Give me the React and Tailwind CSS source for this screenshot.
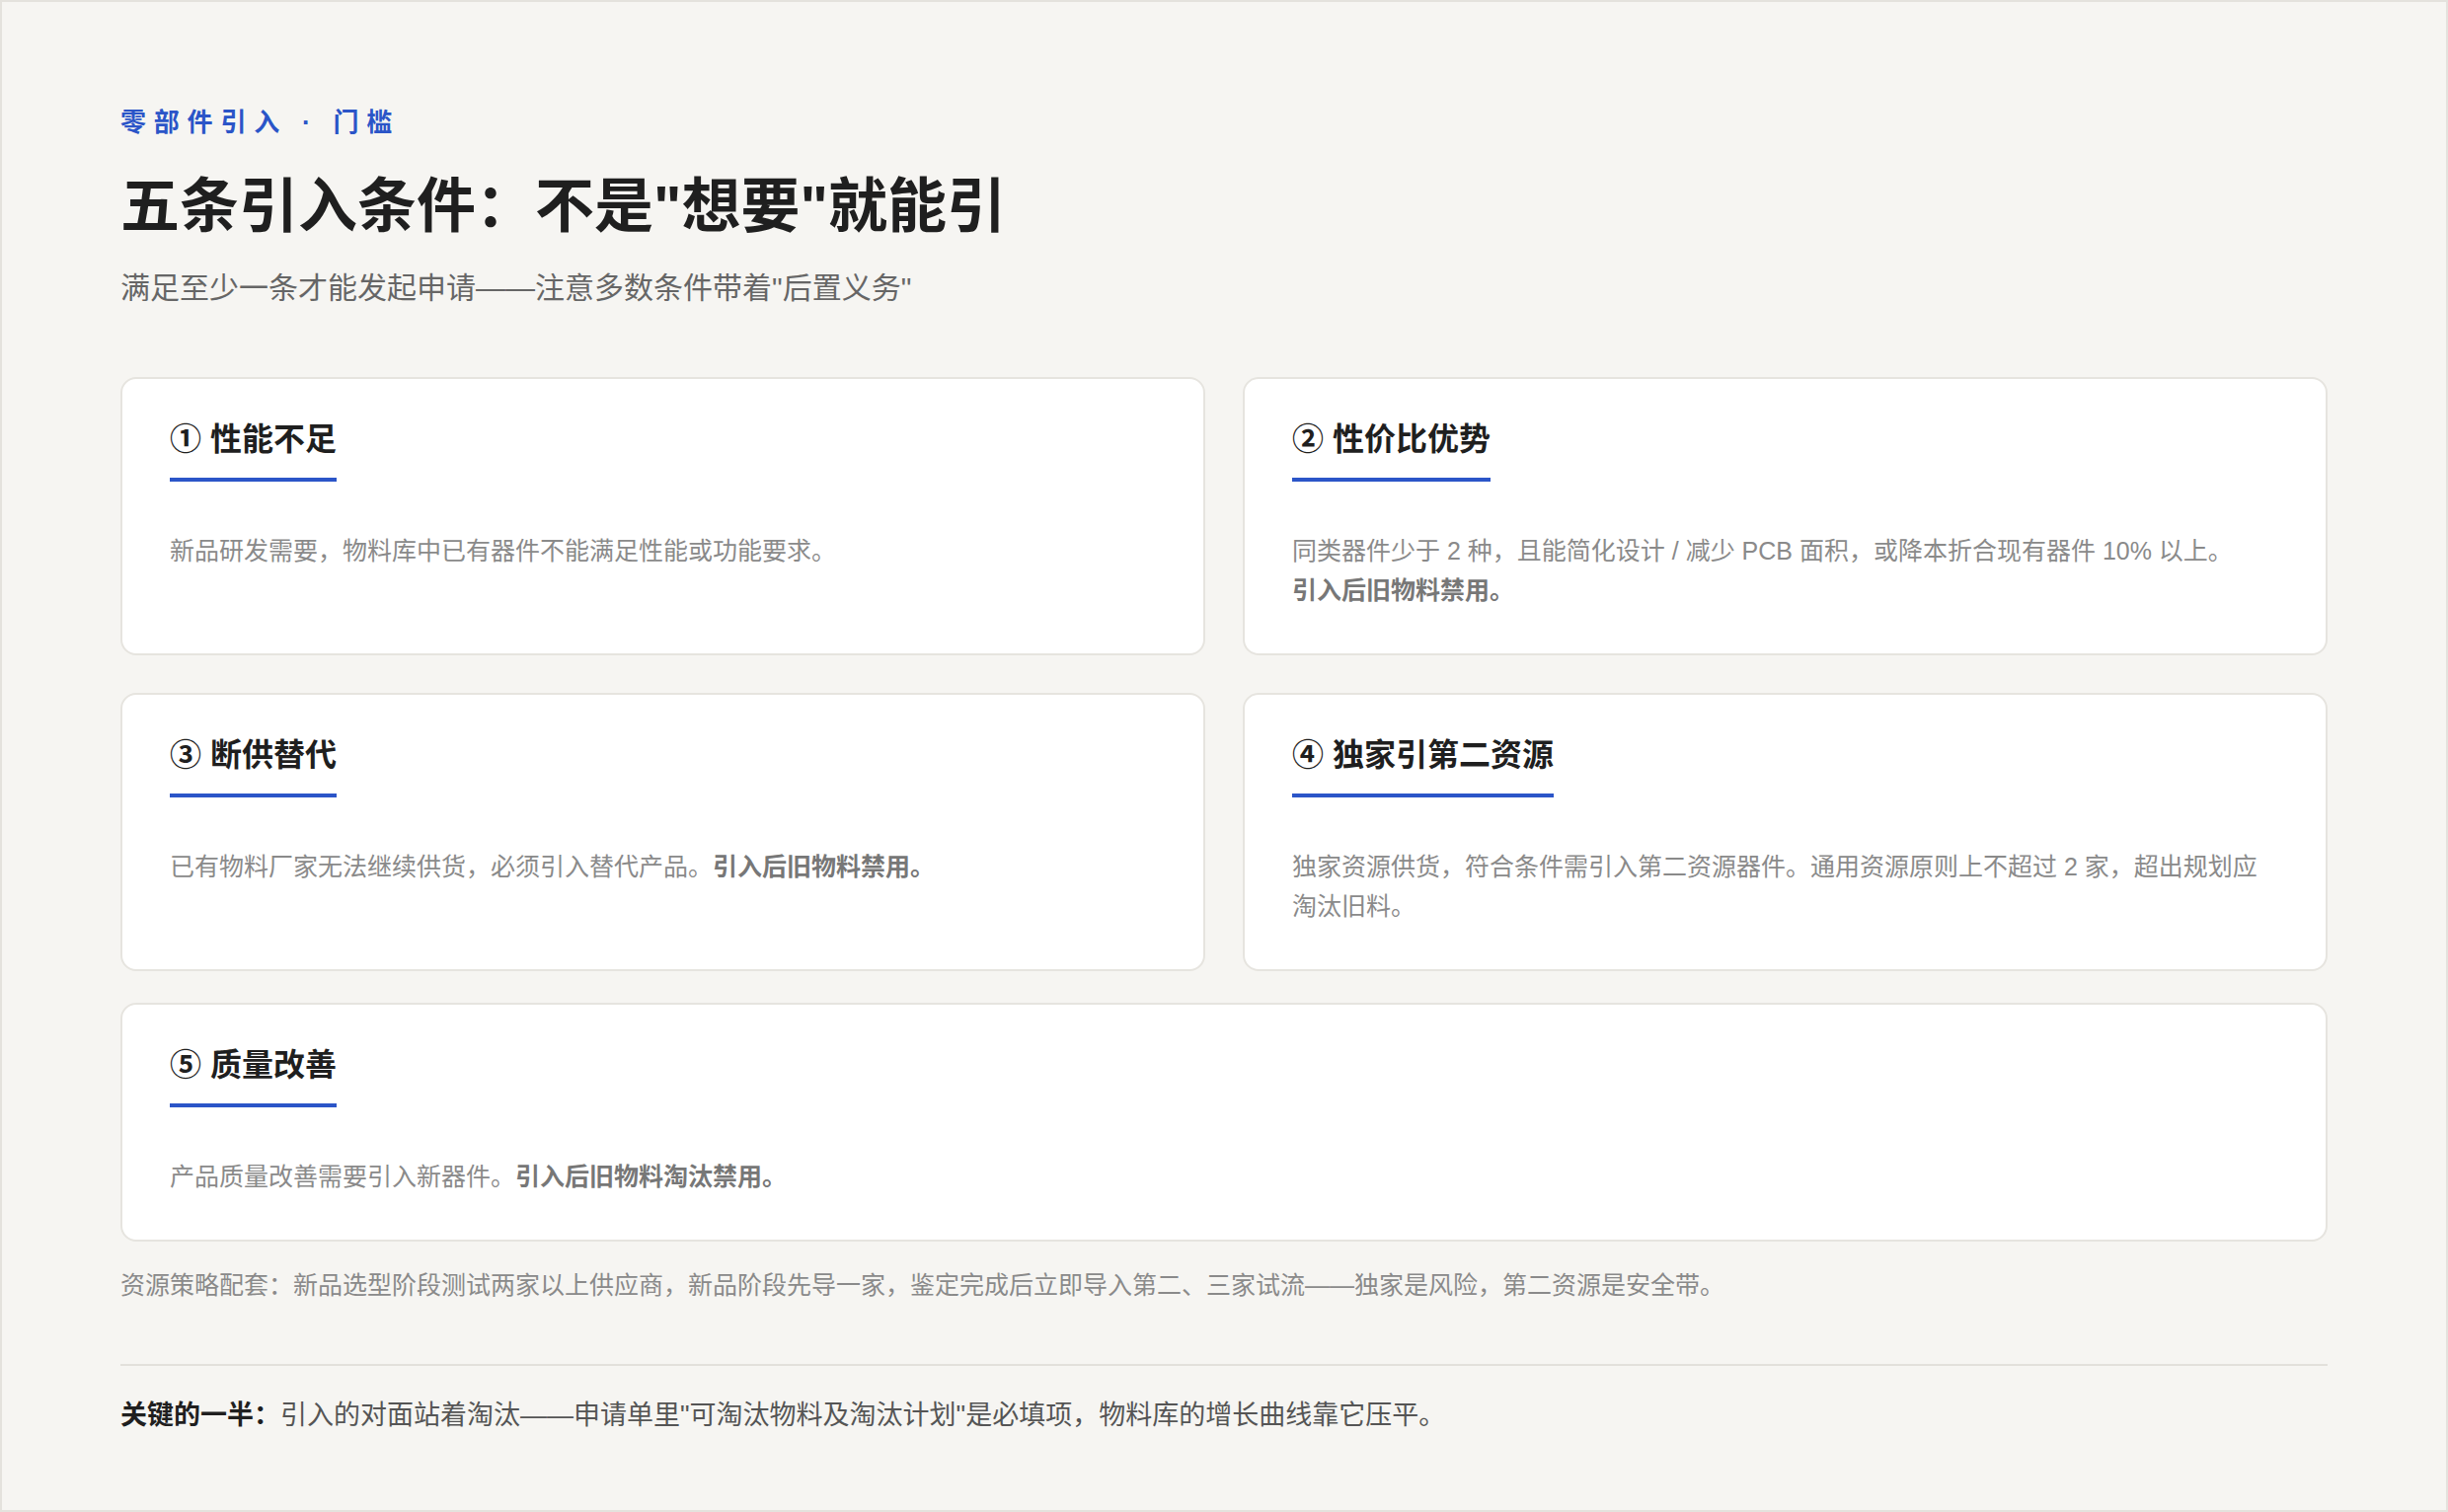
export default function App() {
  const ff = { fontFamily: '"Liberation Sans", "Noto Sans CJK SC", sans-serif' };
  const Card = ({ title, children, className = "" }) => (
    <div className={"bg-white border-2 border-[#e6e4df] rounded-[16px] pt-[42px] pb-[44px] px-[48px] " + className}>
      <div>
        <span className="inline-block text-[32px] leading-[38px] font-bold text-[#1f1f1f] pb-[20px] border-b-[4px] border-[#2b55c8]">{title}</span>
      </div>
      <p className="mt-[50px] text-[25px] leading-[40px] text-[#8a8a8a]">{children}</p>
    </div>
  );
  const B = ({ children }) => <b className="font-bold text-[#777]">{children}</b>;
  return (
    <div style={ff} className="w-[2480px] h-[1532px] bg-[#f6f5f2] border-2 border-[#e4e2dd] px-[120px] pt-[104px]">
      <div className="text-[26px] leading-[36px] font-bold tracking-[0.3em] text-[#2b55c8]">零部件引入 · 门槛</div>
      <h1 className="mt-[28px] text-[60px] leading-[80px] font-bold text-[#1f1f1f]">五条引入条件：不是"想要"就能引</h1>
      <p className="mt-[22px] text-[30px] leading-[40px] text-[#666]">满足至少一条才能发起申请——注意多数条件带着"后置义务"</p>
      <div className="mt-[70px] grid grid-cols-2 gap-x-[38px] gap-y-[38px]">
        <Card title="① 性能不足">新品研发需要，物料库中已有器件不能满足性能或功能要求。</Card>
        <Card title="② 性价比优势">同类器件少于 2 种，且能简化设计 / 减少 PCB 面积，或降本折合现有器件 10% 以上。<br /><B>引入后旧物料禁用。</B></Card>
        <Card title="③ 断供替代">已有物料厂家无法继续供货，必须引入替代产品。<B>引入后旧物料禁用。</B></Card>
        <Card title="④ 独家引第二资源">独家资源供货，符合条件需引入第二资源器件。通用资源原则上不超过 2 家，超出规划应淘汰旧料。</Card>
        <Card title="⑤ 质量改善" className="col-span-2 -mt-[6px]">产品质量改善需要引入新器件。<B>引入后旧物料淘汰禁用。</B></Card>
      </div>
      <p className="mt-[24px] text-[25px] leading-[40px] text-[#8a8a8a]">资源策略配套：新品选型阶段测试两家以上供应商，新品阶段先导一家，鉴定完成后立即导入第二、三家试流——独家是风险，第二资源是安全带。</p>
      <div className="mt-[60px] border-t-2 border-[#e2e0db]" />
      <p className="mt-[30px] text-[27px] leading-[40px] text-[#555]"><b className="font-bold text-[#1f1f1f]">关键的一半：</b>引入的对面站着淘汰——申请单里"可淘汰物料及淘汰计划"是必填项，物料库的增长曲线靠它压平。</p>
    </div>
  );
}
